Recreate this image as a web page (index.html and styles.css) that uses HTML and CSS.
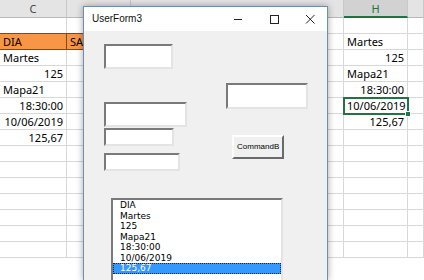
FILE: index.html
```html
<!DOCTYPE html>
<html lang="es">
<head>
    <meta charset="UTF-8">
    <meta name="viewport" content="width=device-width, initial-scale=1.0">
    <title>UserForm3</title>
    <link rel="stylesheet" href="styles.css">
</head>

<body>
    <!-- Hoja de Excel detras del formulario -->
    <div class="sheet">
        <div class="hd">C</div><div class="hd"></div><div class="hd"></div><div class="hd hd-sel">H</div><div class="hd"></div>

        <div class="c"></div><div class="c"></div><div class="c"></div><div class="c"></div><div class="c"></div>
        <div class="c dia">DIA</div><div class="c dia">SAL</div><div class="c"></div><div class="c">Martes</div><div class="c"></div>
        <div class="c">Martes</div><div class="c"></div><div class="c"></div><div class="c num">125</div><div class="c"></div>
        <div class="c num">125</div><div class="c"></div><div class="c"></div><div class="c">Mapa21</div><div class="c"></div>
        <div class="c">Mapa21</div><div class="c"></div><div class="c"></div><div class="c num">18:30:00</div><div class="c"></div>
        <div class="c num">18:30:00</div><div class="c"></div><div class="c"></div><div class="c num active">10/06/2019</div><div class="c"></div>
        <div class="c num">10/06/2019</div><div class="c"></div><div class="c"></div><div class="c num">125,67</div><div class="c"></div>
        <div class="c num">125,67</div><div class="c"></div><div class="c"></div><div class="c"></div><div class="c"></div>
        <div class="c"></div><div class="c"></div><div class="c"></div><div class="c"></div><div class="c"></div>
        <div class="c"></div><div class="c"></div><div class="c"></div><div class="c"></div><div class="c"></div>
        <div class="c"></div><div class="c"></div><div class="c"></div><div class="c"></div><div class="c"></div>
        <div class="c"></div><div class="c"></div><div class="c"></div><div class="c"></div><div class="c"></div>
        <div class="c"></div><div class="c"></div><div class="c"></div><div class="c"></div><div class="c"></div>
        <div class="c"></div><div class="c"></div><div class="c"></div><div class="c"></div><div class="c"></div>
        <div class="c"></div><div class="c"></div><div class="c"></div><div class="c"></div><div class="c"></div>
    </div>

    <!-- Ventana UserForm3 -->
    <div class="form">
        <div class="titlebar">
            <span class="title">UserForm3</span>
            <div class="winbtns">
                <svg width="10" height="10" viewBox="0 0 10 10"><path d="M1 5.5h8" stroke="#222" stroke-width="1"/></svg>
                <svg width="10" height="10" viewBox="0 0 10 10"><rect x="1.5" y="1.5" width="8" height="8" fill="none" stroke="#222" stroke-width="1"/></svg>
                <svg width="10" height="10" viewBox="0 0 10 10"><path d="M1 1l8.5 8.5M9.5 1L1 9.5" stroke="#222" stroke-width="1"/></svg>
            </div>
        </div>
        <div class="formbody">
            <div class="tb tb1"></div>
            <div class="tb tb2"></div>
            <div class="tb tb3"></div>
            <div class="tb tb4"></div>
            <div class="tb tb5"></div>
            <div class="cmd">CommandB</div>

            <div class="listbox">
                <div class="item">DIA</div>
                <div class="item">Martes</div>
                <div class="item">125</div>
                <div class="item">Mapa21</div>
                <div class="item">18:30:00</div>
                <div class="item">10/06/2019</div>
                <div class="item selected">125,67</div>
            </div>
        </div>
    </div>
</body>
</html>
```

FILE: styles.css
```css
body {
    margin: 0;
    width: 424px;
    height: 280px;
    overflow: hidden;
    position: relative;
    background: #fff;
}

/* hoja */
.sheet {
    display: grid;
    grid-template-columns: 67px 64px 213px 64px 16px;
    grid-template-rows: 18px repeat(16, 16px);
    font-family: "Noto Sans", sans-serif;
    font-size: 11px;
    color: #000;
}

.hd {
    box-sizing: border-box;
    background: #e4e4e4;
    border-right: 1px solid #c8c8c8;
    border-bottom: 1px solid #b8b8b8;
    text-align: center;
    line-height: 17px;
    color: #444;
}

.hd-sel {
    background: #d2d2d2;
    color: #217346;
    border-bottom: 2px solid #217346;
}

.c {
    box-sizing: border-box;
    border-right: 1px solid #d8d8d8;
    border-bottom: 1px solid #d8d8d8;
    padding: 0 3px;
    line-height: 15px;
    white-space: nowrap;
    overflow: hidden;
}

.num {
    text-align: right;
}

.dia {
    background: #f79646;
    border-right-color: #7a4a22;
    border-bottom-color: #7a4a22;
    border-top: 1px solid #7a4a22;
    margin-top: -1px;
    line-height: 15px;
}

.active {
    position: relative;
    overflow: visible;
    outline: 2px solid #217346;
    outline-offset: -1px;
}

.active::after {
    content: "";
    position: absolute;
    right: -4px;
    bottom: -4px;
    width: 4px;
    height: 4px;
    background: #217346;
    border: 1px solid #fff;
}

/* formulario */
.form {
    position: absolute;
    left: 83px;
    top: 6px;
    bottom: 0;
    width: 243px;
    border: 1px solid #6f8db0;
    border-bottom: 0;
    box-shadow: 0 0 7px rgba(0, 0, 0, 0.35);
    background: #f0f0f0;
    display: flex;
    flex-direction: column;
}

.titlebar {
    height: 24px;
    background: #fff;
    display: flex;
    align-items: center;
    justify-content: space-between;
    padding-left: 8px;
}

.title {
    font-family: "Liberation Sans", Arial, sans-serif;
    font-size: 10px;
    color: #111;
    margin-top: -1px;
}

.winbtns {
    display: flex;
    align-items: center;
    gap: 26px;
    padding-right: 12px;
}

.winbtns svg {
    display: block;
}

.formbody {
    flex: 1;
    position: relative;
}

.tb {
    position: absolute;
    box-sizing: border-box;
    background: #fff;
    border: 2px solid;
    border-color: #7a7a7a #e4e4e4 #e4e4e4 #7a7a7a;
}

.tb1 { left: 20px; top: 13px; width: 69px; height: 25px; }
.tb2 { left: 20px; top: 71px; width: 83px; height: 25px; }
.tb3 { left: 20px; top: 97px; width: 70px; height: 18px; }
.tb4 { left: 20px; top: 122px; width: 76px; height: 18px; }
.tb5 { left: 142px; top: 52px; width: 82px; height: 26px; }

.cmd {
    position: absolute;
    left: 148px;
    top: 104px;
    width: 52px;
    height: 24px;
    box-sizing: border-box;
    border: 2px solid;
    border-color: #fff #6a6a6a #6a6a6a #fcfcfc;
    background: #f0f0f0;
    font-family: "Liberation Sans", Arial, sans-serif;
    font-size: 8px;
    line-height: 20px;
    padding-left: 3px;
    white-space: nowrap;
    overflow: hidden;
    color: #000;
}

.listbox {
    position: absolute;
    left: 27px;
    top: 167px;
    bottom: 0;
    width: 172px;
    box-sizing: border-box;
    background: #fff;
    border: 2px solid;
    border-color: #7a7a7a #e4e4e4 #e4e4e4 #7a7a7a;
    border-bottom: 0;
    font-family: "DejaVu Sans", Verdana, sans-serif;
    font-size: 9px;
}

.item {
    height: 10.5px;
    line-height: 10.5px;
    padding-left: 7px;
    color: #000;
}

.selected {
    background: #3399ff;
    color: #fff;
    outline: 1px dotted #222;
    outline-offset: -1px;
}
```
